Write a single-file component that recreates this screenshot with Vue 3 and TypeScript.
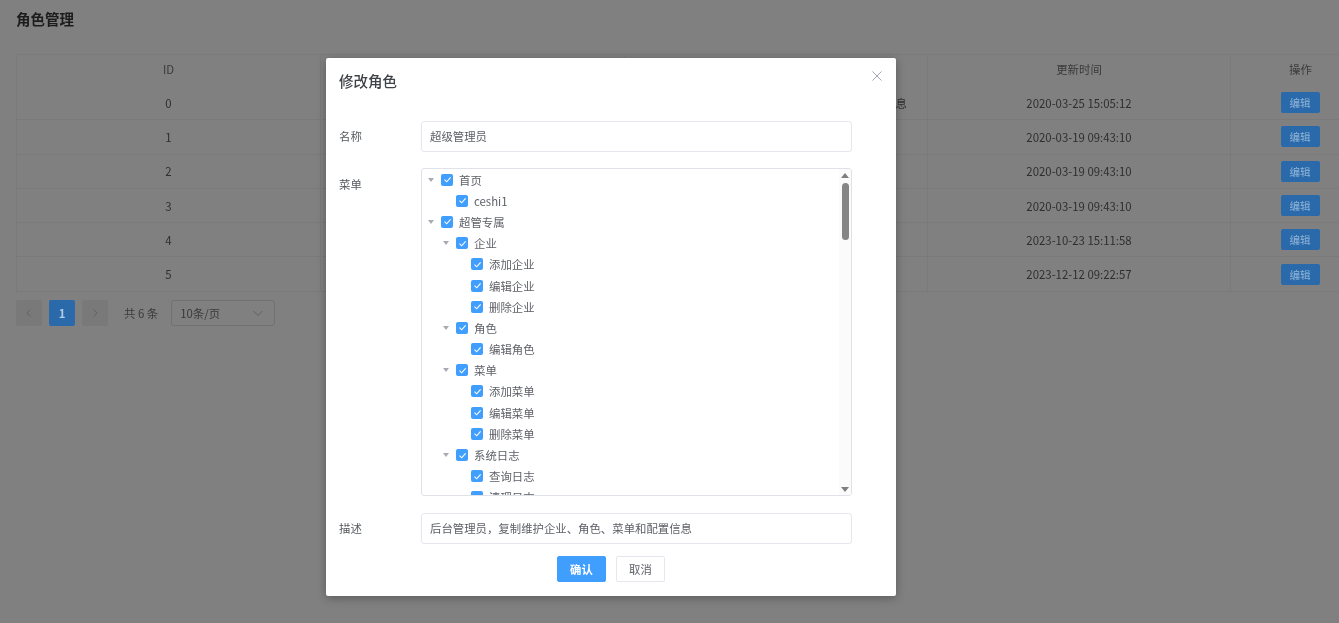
<script setup lang="ts">
interface Role {
  id: number;
  updated: string;
  desc?: string;
}

interface TreeNode {
  label: string;
  level: number;
  arrow?: boolean;
}

const roles: Role[] = [
  { id: 0, updated: "2020-03-25 15:05:12", desc: "后台管理员，复制维护企业、角色、菜单和配置信息" },
  { id: 1, updated: "2020-03-19 09:43:10" },
  { id: 2, updated: "2020-03-19 09:43:10" },
  { id: 3, updated: "2020-03-19 09:43:10" },
  { id: 4, updated: "2023-10-23 15:11:58" },
  { id: 5, updated: "2023-12-12 09:22:57" },
];

const tree: TreeNode[] = [
  { label: "首页", level: 0, arrow: true },
  { label: "ceshi1", level: 1 },
  { label: "超管专属", level: 0, arrow: true },
  { label: "企业", level: 1, arrow: true },
  { label: "添加企业", level: 2 },
  { label: "编辑企业", level: 2 },
  { label: "删除企业", level: 2 },
  { label: "角色", level: 1, arrow: true },
  { label: "编辑角色", level: 2 },
  { label: "菜单", level: 1, arrow: true },
  { label: "添加菜单", level: 2 },
  { label: "编辑菜单", level: 2 },
  { label: "删除菜单", level: 2 },
  { label: "系统日志", level: 1, arrow: true },
  { label: "查询日志", level: 2 },
  { label: "清理日志", level: 2 },
];
</script>

<template>
  <div class="page">
    <h1 class="title">角色管理</h1>
    <div class="table">
      <div class="row head">
        <div class="cell">ID</div>
        <div class="cell">名称</div>
        <div class="cell">描述</div>
        <div class="cell">更新时间</div>
        <div class="cell">操作</div>
      </div>
      <div v-for="role in roles" :key="role.id" class="row">
        <div class="cell">{{ role.id }}</div>
        <div class="cell"></div>
        <div class="cell">{{ role.desc }}</div>
        <div class="cell">{{ role.updated }}</div>
        <div class="cell"><button class="edit">编辑</button></div>
      </div>
    </div>
    <div class="pager">
      <span class="page-btn">
        <svg width="10" height="10" viewBox="0 0 10 10"><path d="M6.5 1.5 3 5l3.5 3.5" /></svg>
      </span>
      <span class="page-btn current">1</span>
      <span class="page-btn">
        <svg width="10" height="10" viewBox="0 0 10 10"><path d="M3.5 1.5 7 5 3.5 8.5" /></svg>
      </span>
      <span class="total">共 6 条</span>
      <span class="size">
        10条/页
        <svg width="12" height="12" viewBox="0 0 12 12"><path d="M1.5 4 6 8.5 10.5 4" /></svg>
      </span>
    </div>

    <div class="modal">
      <div class="modal-title">修改角色</div>
      <svg class="close" width="10" height="10" viewBox="0 0 10 10"><path d="M.5.5l9 9M9.5.5l-9 9" /></svg>
      <div class="field">
        <label>名称</label>
        <div class="input">超级管理员</div>
      </div>
      <div class="field tree-field">
        <label>菜单</label>
        <div class="tree">
          <div v-for="node in tree" :key="node.label" class="node" :class="`level-${node.level}`">
            <span class="caret" :class="{ hidden: !node.arrow }"></span>
            <span class="check">
              <svg width="9" height="9" viewBox="0 0 9 9"><path d="M1.5 4.6 3.7 6.8 7.6 2.3" /></svg>
            </span>
            <span class="label">{{ node.label }}</span>
          </div>
          <div class="scrollbar">
            <span class="up"></span>
            <span class="thumb"></span>
            <span class="down"></span>
          </div>
        </div>
      </div>
      <div class="field desc-field">
        <label>描述</label>
        <div class="input">后台管理员，复制维护企业、角色、菜单和配置信息</div>
      </div>
      <div class="actions">
        <button class="btn primary">确认</button>
        <button class="btn">取消</button>
      </div>
    </div>
  </div>
</template>

<style scoped>
.page {
  position: relative;
  width: 1339px;
  height: 623px;
  overflow: hidden;
  background: #808080;
  color: #2e2e2e;
  font-family: "Noto Sans CJK SC", "Noto Sans", sans-serif;
  font-size: 11.4px;
  filter: blur(0.4px);
}

.title {
  margin: 0;
  padding: 10px 16px 0;
  height: 54px;
  box-sizing: border-box;
  font-size: 14.5px;
  font-weight: 700;
  line-height: 18px;
  color: #1c1c1c;
}

.table {
  width: 1354px;
  margin-left: 16px;
  border-top: 1px solid #7a7a7a;
  border-left: 1px solid #7a7a7a;
}

.row {
  display: grid;
  grid-template-columns: 304px 304px 303px 303px 140px;
  height: 34.3px;
  border-bottom: 1px solid #7a7a7a;
  box-sizing: border-box;
}

.row.head {
  height: 31px;
  border-bottom: 0;
  color: #3a3a3a;
}

.row.head .cell {
  padding-bottom: 3px;
}

.cell {
  display: flex;
  align-items: center;
  justify-content: center;
  box-sizing: border-box;
  border-right: 1px solid #7a7a7a;
  white-space: nowrap;
}

.edit {
  width: 39px;
  height: 21px;
  margin-left: -1px;
  padding: 0;
  border: 0;
  border-radius: 2px;
  background: #2a6aab;
  color: #8fb3d6;
  font: inherit;
  font-size: 10.5px;
}

.pager {
  display: flex;
  align-items: center;
  margin: 8px 0 0 16px;
  height: 26px;
}

.page-btn {
  display: flex;
  align-items: center;
  justify-content: center;
  width: 26px;
  height: 26px;
  margin-right: 7px;
  border-radius: 2px;
  background: #797979;
}

.page-btn svg,
.size svg {
  fill: none;
  stroke: #626262;
  stroke-width: 1;
}

.page-btn.current {
  background: #2a6aab;
  color: #b4cde4;
  font-weight: 700;
}

.total {
  margin-left: 9px;
  color: #3a3a3a;
}

.size {
  display: flex;
  align-items: center;
  justify-content: space-between;
  box-sizing: border-box;
  width: 104px;
  height: 26px;
  margin-left: 13px;
  padding: 0 10px 0 8px;
  border: 1px solid #717171;
  border-radius: 3px;
  color: #3a3a3a;
}

.modal {
  position: absolute;
  left: 326px;
  top: 58px;
  width: 570px;
  height: 538px;
  padding: 0 44px 0 13px;
  box-sizing: border-box;
  background: #fff;
  border-radius: 2px;
  box-shadow: 0 2px 10px rgba(0, 0, 0, 0.3);
  color: #5c5f66;
}

.modal-title {
  height: 63px;
  padding-top: 12px;
  box-sizing: border-box;
  font-size: 14.5px;
  line-height: 22px;
  font-weight: 500;
  color: #3f4247;
}

.close {
  position: absolute;
  right: 14px;
  top: 13px;
  fill: none;
  stroke: #a3a6ad;
  stroke-width: 1;
}

.field {
  display: grid;
  grid-template-columns: 82px 431px;
  align-items: center;
  margin-bottom: 16px;
}

.field label {
  padding-bottom: 2px;
  color: #55585e;
}

.tree-field {
  align-items: start;
  margin-bottom: 17px;
}

.tree-field label {
  padding-bottom: 0;
  line-height: 33px;
}

.input {
  height: 31px;
  padding: 0 8px;
  box-sizing: border-box;
  border: 1px solid #e4e7ed;
  border-radius: 3px;
  line-height: 29px;
}

.tree {
  position: relative;
  height: 328px;
  overflow: hidden;
  box-sizing: border-box;
  border: 1px solid #dfe2e8;
  border-radius: 3px;
}

.node {
  display: flex;
  align-items: center;
  height: 21.2px;
}

.level-1 {
  padding-left: 15px;
}

.level-2 {
  padding-left: 30px;
}

.caret {
  width: 0;
  height: 0;
  margin: 0 7px 0 6px;
  border-left: 3.5px solid transparent;
  border-right: 3.5px solid transparent;
  border-top: 4px solid #a8abb2;
}

.caret.hidden {
  visibility: hidden;
}

.check {
  display: flex;
  align-items: center;
  justify-content: center;
  width: 12px;
  height: 12px;
  margin-right: 6px;
  border-radius: 2px;
  background: #409eff;
}

.check svg {
  fill: none;
  stroke: #fff;
  stroke-width: 1.1;
}

.scrollbar {
  position: absolute;
  top: 0;
  right: 0;
  bottom: 0;
  width: 12px;
  background: #fbfbfb;
}

.up,
.down {
  position: absolute;
  left: 2px;
  width: 0;
  height: 0;
  border-left: 4px solid transparent;
  border-right: 4px solid transparent;
}

.up {
  top: 4px;
  border-bottom: 5px solid #7f7f7f;
}

.down {
  bottom: 3px;
  border-top: 5px solid #7f7f7f;
}

.thumb {
  position: absolute;
  left: 3px;
  top: 14px;
  width: 7px;
  height: 57px;
  border-radius: 4px;
  background: #868686;
}

.actions {
  display: flex;
  justify-content: center;
  gap: 10px;
  margin: -4px -44px 0 -13px;
}

.btn {
  width: 49px;
  height: 26px;
  padding: 0;
  border: 1px solid #e4e7ed;
  border-radius: 2px;
  background: #fff;
  color: #5c5f66;
  font: inherit;
}

.btn.primary {
  border-color: #409eff;
  background: #409eff;
  color: #fff;
  font-weight: 700;
}
</style>
